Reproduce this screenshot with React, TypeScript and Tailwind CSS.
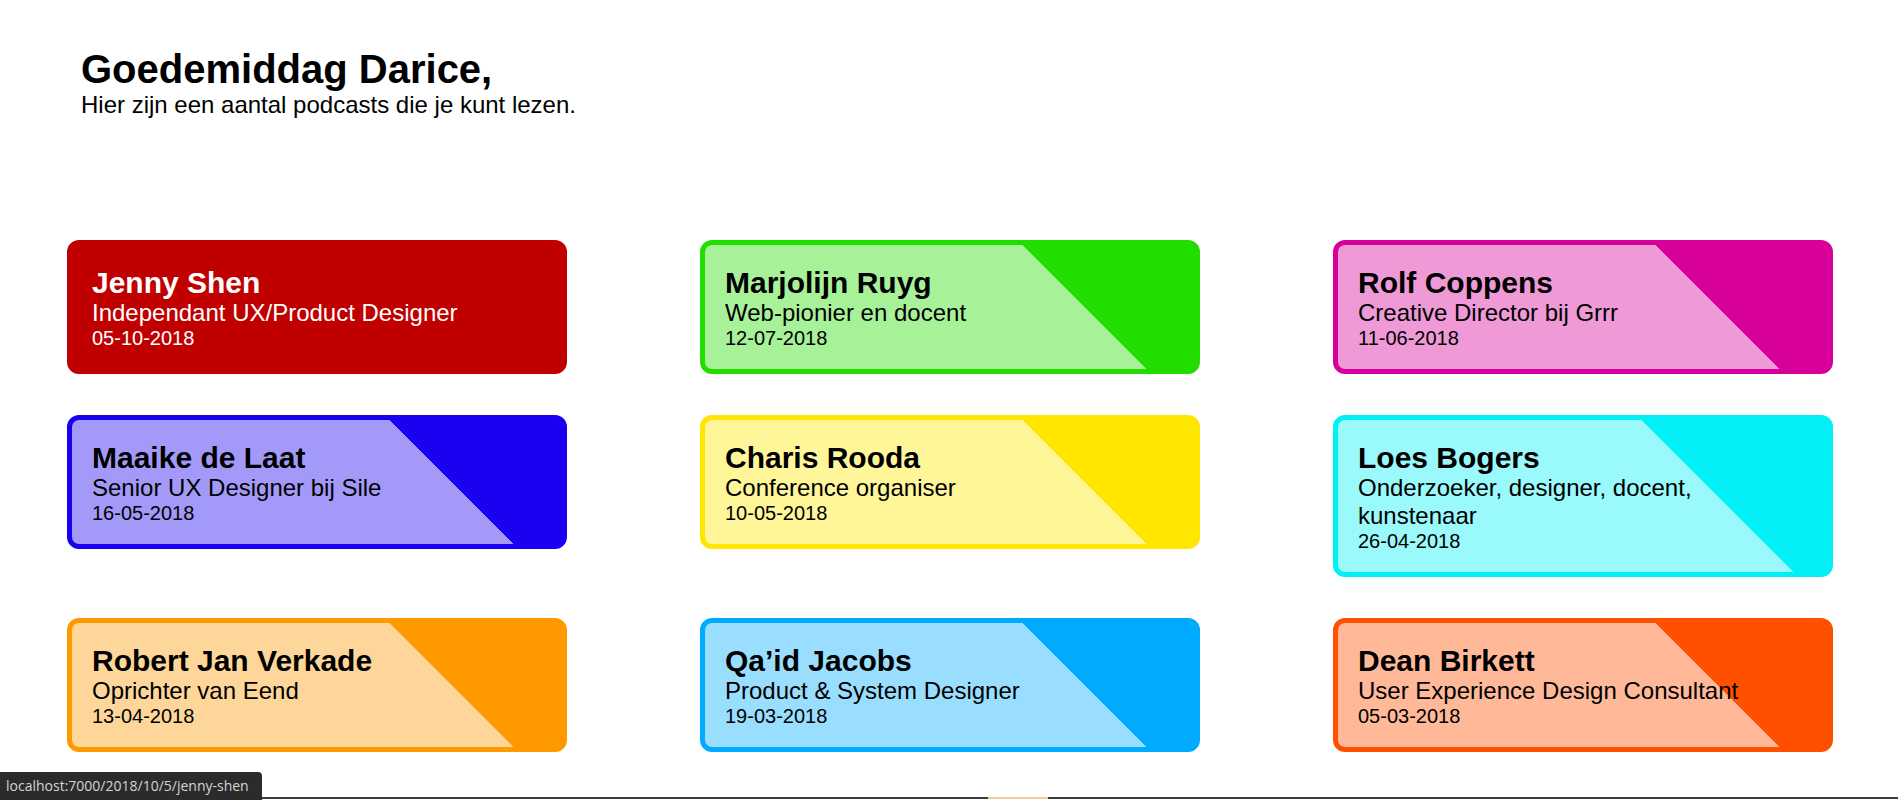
import React from 'react'

type Podcast = {
  naam: string
  rol: string
  datum: string
  kleur: string
  actief?: boolean
}

// kleur = volledige class string, anders pakt tailwind hem niet op
const podcasts: Podcast[] = [
  { naam: 'Jenny Shen', rol: 'Independant UX/Product Designer', datum: '05-10-2018',
    kleur: 'bg-[#c00000] border-[#c00000] text-white', actief: true },
  { naam: 'Marjolijn Ruyg', rol: 'Web-pionier en docent', datum: '12-07-2018',
    kleur: 'bg-[linear-gradient(45deg,#a7f199_calc(50%_+_95px),#22dd00_0)] border-[#22dd00]' },
  { naam: 'Rolf Coppens', rol: 'Creative Director bij Grrr', datum: '11-06-2018',
    kleur: 'bg-[linear-gradient(45deg,#ef99d7_calc(50%_+_95px),#d8009a_0)] border-[#d8009a]' },
  { naam: 'Maaike de Laat', rol: 'Senior UX Designer bij Sile', datum: '16-05-2018',
    kleur: 'bg-[linear-gradient(45deg,#a399f9_calc(50%_+_95px),#1a00f0_0)] border-[#1a00f0]' },
  { naam: 'Charis Rooda', rol: 'Conference organiser', datum: '10-05-2018',
    kleur: 'bg-[linear-gradient(45deg,#fff599_calc(50%_+_95px),#ffe600_0)] border-[#ffe600]' },
  { naam: 'Loes Bogers', rol: 'Onderzoeker, designer, docent, kunstenaar', datum: '26-04-2018',
    kleur: 'bg-[linear-gradient(45deg,#99f9fb_calc(50%_+_95px),#00f0f5_0)] border-[#00f0f5]' },
  { naam: 'Robert Jan Verkade', rol: 'Oprichter van Eend', datum: '13-04-2018',
    kleur: 'bg-[linear-gradient(45deg,#ffd699_calc(50%_+_95px),#ff9900_0)] border-[#ff9900]' },
  { naam: 'Qa’id Jacobs', rol: 'Product & System Designer', datum: '19-03-2018',
    kleur: 'bg-[linear-gradient(45deg,#99ddff_calc(50%_+_95px),#00aaff_0)] border-[#00aaff]' },
  { naam: 'Dean Birkett', rol: 'User Experience Design Consultant', datum: '05-03-2018',
    kleur: 'bg-[linear-gradient(45deg,#ffb999_calc(50%_+_95px),#ff5000_0)] border-[#ff5000]' },
]

function PodcastCard({ podcast }: { podcast: Podcast }) {
  return (
    <a href="#" className={`block rounded-[12px] border-[5px] px-5 pt-[21px] pb-[20px] ${podcast.actief ? '' : 'text-black'} ${podcast.kleur}`}>
      <h2 className="text-[30px] font-bold leading-[1.1]">{podcast.naam}</h2>
      <p className="text-[24px] leading-[normal]">{podcast.rol}</p>
      <p className="text-[20px] leading-[1.1]">{podcast.datum}</p>
    </a>
  )
}

export default function App() {
  return (
    <div className="relative min-h-screen bg-white text-black font-['Liberation_Sans',Arial,sans-serif] overflow-hidden">
      <header className="pl-[81px] pt-[47px]">
        <h1 className="text-[40px] font-bold leading-[1.1]">Goedemiddag Darice,</h1>
        <p className="text-[24px] leading-[normal]">Hier zijn een aantal podcasts die je kunt lezen.</p>
      </header>

      <main className="ml-[67px] mt-[121px] grid grid-cols-[repeat(3,500px)] gap-x-[133px] gap-y-[41px] items-start">
        {podcasts.map(p => <PodcastCard key={p.naam} podcast={p} />)}
      </main>

      {/* begin van wat er onder de vouw zit */}
      <div className="ml-[60px] mt-[45px] h-[2px] bg-[#3c3c3c] flex">
        <div className="ml-[928px] w-[60px] bg-[#f3c9a0]" />
      </div>

      {/* hover url van de browser */}
      <div className="fixed bottom-0 left-0 h-[28px] w-[262px] rounded-tr-[4px] bg-[#2b2b2b] pl-[6px] text-[14px] leading-[28px] text-[#d4d4d4] font-['Open_Sans','Noto_Sans',sans-serif]">
        localhost:7000/2018/10/5/jenny-shen
      </div>
    </div>
  )
}
